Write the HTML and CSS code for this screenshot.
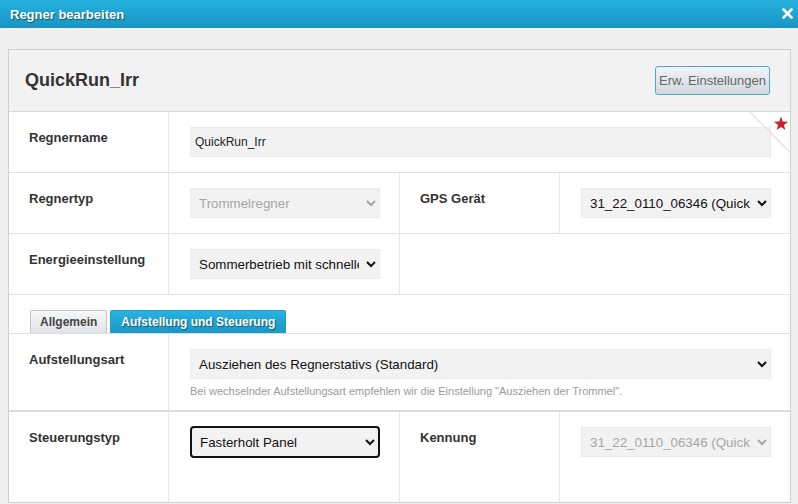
FILE: index.html
```html
<!DOCTYPE html>
<html lang="de">
<head>
    <meta charset="UTF-8">
    <title>Regner bearbeiten</title>
    <link rel="stylesheet" href="styles.css">
</head>
<body>
    <!-- Titelleiste des Dialogs -->
    <div class="titlebar">
        <span class="titlebar-text">Regner bearbeiten</span>
        <svg class="close-icon" width="11" height="11" viewBox="0 0 11 11">
            <path d="M1.5 1.5 L9.5 9.5 M9.5 1.5 L1.5 9.5" stroke="#fff" stroke-width="2.6" stroke-linecap="square"/>
        </svg>
    </div>

    <div class="panel">
        <!-- Kopf mit Name und Button -->
        <div class="panel-head">
            <h2>QuickRun_Irr</h2>
            <button class="btn-ext">Erw. Einstellungen</button>
        </div>

        <div class="form-row">
            <div class="cell label">Regnername</div>
            <div class="cell value span-3">
                <input class="text-input" type="text" value="QuickRun_Irr">
            </div>
            <!-- Pflichtfeld-Ecke -->
            <svg class="corner" width="40" height="40" viewBox="0 0 40 40">
                <line x1="0" y1="0" x2="40" y2="40" stroke="#e4e4e4" stroke-width="1.5"/>
                <polygon transform="translate(23 4)" fill="#cc1f2e"
                    points="8,0.5 9.76,5.57 15.13,5.68 10.85,8.93 12.41,14.07 8,11 3.59,14.07 5.15,8.93 0.87,5.68 6.24,5.57"/>
            </svg>
        </div>

        <div class="form-row">
            <div class="cell label">Regnertyp</div>
            <div class="cell value">
                <select class="select" disabled><option>Trommelregner</option></select>
            </div>
            <div class="cell label">GPS Gerät</div>
            <div class="cell value last">
                <select class="select"><option>31_22_0110_06346 (QuickRun_Irr)</option></select>
            </div>
        </div>

        <div class="form-row">
            <div class="cell label">Energieeinstellung</div>
            <div class="cell value">
                <select class="select"><option>Sommerbetrieb mit schneller Rückfahrt</option></select>
            </div>
            <div class="cell span-2"></div>
        </div>

        <!-- Reiter -->
        <div class="tabs">
            <div class="tab">Allgemein</div>
            <div class="tab active">Aufstellung und Steuerung</div>
        </div>

        <div class="form-row row-thick">
            <div class="cell label">Aufstellungsart</div>
            <div class="cell value span-3 help-cell">
                <select class="select select-wide"><option>Ausziehen des Regnerstativs (Standard)</option></select>
                <p class="help">Bei wechselnder Aufstellungsart empfehlen wir die Einstellung "Ausziehen der Trommel".</p>
            </div>
        </div>

        <div class="form-row row-last">
            <div class="cell label">Steuerungstyp</div>
            <div class="cell value">
                <select class="select is-focused"><option>Fasterholt Panel</option></select>
            </div>
            <div class="cell label">Kennung</div>
            <div class="cell value last">
                <select class="select" disabled><option>31_22_0110_06346 (QuickRun_Irr)</option></select>
            </div>
        </div>
    </div>
</body>
</html>
```

FILE: styles.css
```css
/* Grundlegendes Reset */
* {
    margin: 0;
    padding: 0;
    box-sizing: border-box;
}

body {
    font-family: "Liberation Sans", Arial, sans-serif;
    background: #efefef;
    color: #333;
    overflow: hidden;
}

/* Blaue Titelleiste */
.titlebar {
    height: 28px;
    display: flex;
    align-items: center;
    justify-content: space-between;
    padding: 0 5px 0 10px;
    background: linear-gradient(to bottom, #24b1de 0%, #1a95c3 100%);
}

.titlebar-text {
    color: #fff;
    font-size: 13px;
    font-weight: bold;
    text-shadow: 1px 1px 1px rgba(0, 0, 0, 0.45);
}

.close-icon {
    margin-top: -2px;
}

/* Hauptpanel */
.panel {
    margin: 21px 0 0 8px;
    width: 783px;
    background: #fff;
    border: 1px solid #cfcfcf;
}

.panel-head {
    height: 62px;
    display: flex;
    align-items: center;
    justify-content: space-between;
    padding: 0 20px 0 16px;
    background: #f2f2f2;
    border-bottom: 1px solid #d9d9d9;
}

.panel-head h2 {
    font-size: 18px;
    font-weight: bold;
    color: #333;
}

.btn-ext {
    height: 29px;
    padding: 0 3px;
    font-family: "Liberation Sans", Arial, sans-serif;
    font-size: 13px;
    color: #666;
    background: linear-gradient(to bottom, #f2f4f6 0%, #d3d9de 100%);
    border: 1px solid #4aaad6;
    border-radius: 3px;
}

/* Formularzeilen */
.form-row {
    position: relative;
    display: grid;
    grid-template-columns: 160px 231px 160px 1fr;
    border-bottom: 1px solid #e2e2e2;
}

.row-thick {
    border-bottom: 2px solid #dcdcdc;
}

.row-last {
    min-height: 90px;
    border-bottom: none;
}

.cell {
    border-right: 1px solid #e6e6e6;
}

.cell.last,
.cell.span-3,
.cell.span-2 {
    border-right: none;
}

.span-3 {
    grid-column: span 3;
}

.span-2 {
    grid-column: span 2;
}

.label {
    padding: 16px 20px 14px;
    font-size: 13px;
    font-weight: bold;
    line-height: 20px;
    color: #333;
}

.value {
    padding: 15px 19px 15px 21px;
}

.help-cell {
    padding-bottom: 12px;
}

.text-input {
    width: 100%;
    height: 30px;
    padding: 0 4px;
    font-family: "Liberation Sans", Arial, sans-serif;
    font-size: 12px;
    color: #222;
    background: #f2f2f2;
    border: 1px solid #ebebeb;
    outline: none;
}

.select {
    width: 100%;
    height: 30px;
    padding: 0 4px;
    font-family: "Liberation Sans", Arial, sans-serif;
    font-size: 13.33px;
    color: #111;
    background-color: #f2f2f2;
    border: 1px solid #ebebeb;
    border-radius: 0;
}

.select:disabled {
    color: #a6a6a6;
    opacity: 1;
}

/* Fokussiertes Auswahlfeld */
.select.is-focused {
    height: 32px;
    margin: -1px 0 0 0;
    border: 2px solid #111;
    border-radius: 4px;
}

.help {
    margin-top: 5px;
    font-size: 11px;
    line-height: 14px;
    color: #9a9a9a;
}

/* Ecke mit Stern (Pflichtfeld) */
.corner {
    position: absolute;
    top: 0;
    right: 0;
}

/* Reiter */
.tabs {
    height: 39px;
    display: flex;
    align-items: flex-end;
    gap: 3px;
    padding-left: 21px;
    border-bottom: 1px solid #dedede;
}

.tab {
    height: 23px;
    padding: 0 9px;
    display: flex;
    align-items: center;
    font-size: 12px;
    font-weight: bold;
    color: #444;
    background: linear-gradient(to bottom, #f5f7f8 0%, #e1e5e8 100%);
    border: 1px solid #c4c4c4;
    border-bottom: none;
    border-radius: 2px 2px 0 0;
}

.tab.active {
    padding: 0 10px;
    color: #fff;
    background: linear-gradient(to bottom, #28b2e0 0%, #1b97c7 100%);
    border-color: #1e9fcf;
    text-shadow: 1px 1px 1px rgba(0, 0, 0, 0.45);
}
```
